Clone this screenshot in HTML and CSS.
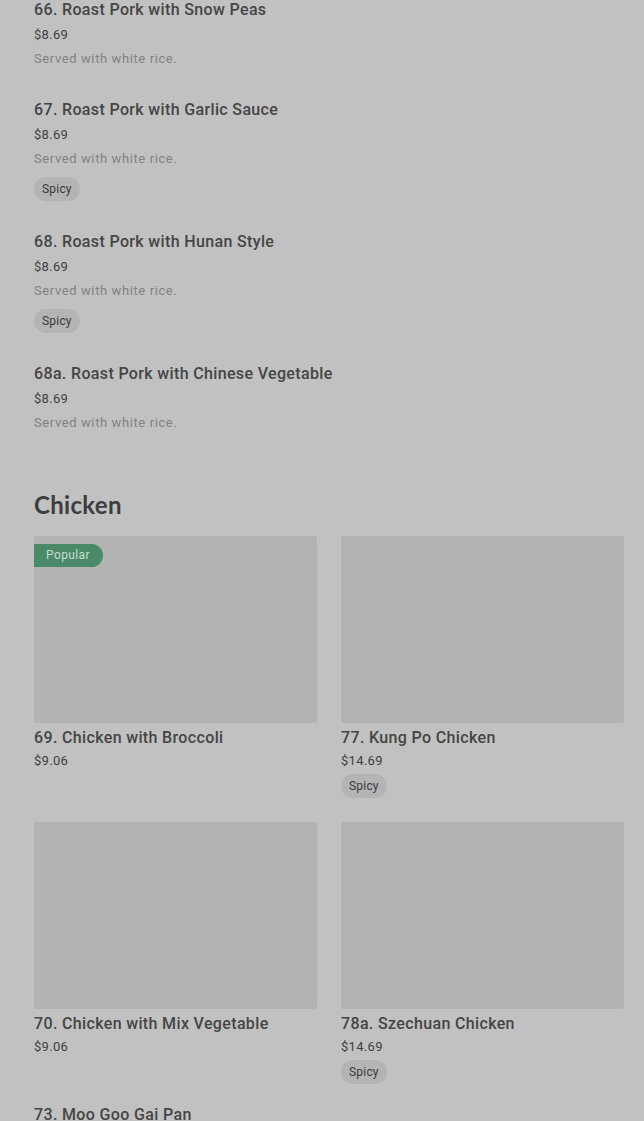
FILE: index.html
```html
<!DOCTYPE html>
<html lang="en">
<head>
    <meta charset="UTF-8" />
    <title>Menu</title>
    <link rel="stylesheet" href="styles.css">
</head>
<body>

<div class="menu">

    <div class="item-list">
        <div class="item">
            <h4 class="item-name">66. Roast Pork with Snow Peas</h4>
            <div class="item-price">$8.69</div>
            <p class="item-desc">Served with white rice.</p>
        </div>
        <div class="item">
            <h4 class="item-name">67. Roast Pork with Garlic Sauce</h4>
            <div class="item-price">$8.69</div>
            <p class="item-desc">Served with white rice.</p>
            <span class="tag">Spicy</span>
        </div>
        <div class="item">
            <h4 class="item-name">68. Roast Pork with Hunan Style</h4>
            <div class="item-price">$8.69</div>
            <p class="item-desc">Served with white rice.</p>
            <span class="tag">Spicy</span>
        </div>
        <div class="item">
            <h4 class="item-name">68a. Roast Pork with Chinese Vegetable</h4>
            <div class="item-price">$8.69</div>
            <p class="item-desc">Served with white rice.</p>
        </div>
    </div>

    <h2 class="section-title">Chicken</h2>

    <div class="card-grid">
        <div class="card">
            <div class="card-img">
                <span class="popular">Popular</span>
            </div>
            <h4 class="item-name">69. Chicken with Broccoli</h4>
            <div class="item-price">$9.06</div>
        </div>
        <div class="card">
            <div class="card-img"></div>
            <h4 class="item-name">77. Kung Po Chicken</h4>
            <div class="item-price">$14.69</div>
            <span class="tag">Spicy</span>
        </div>
        <div class="card">
            <div class="card-img"></div>
            <h4 class="item-name">70. Chicken with Mix Vegetable</h4>
            <div class="item-price">$9.06</div>
        </div>
        <div class="card">
            <div class="card-img"></div>
            <h4 class="item-name">78a. Szechuan Chicken</h4>
            <div class="item-price">$14.69</div>
            <span class="tag">Spicy</span>
        </div>
        <div class="card no-img">
            <h4 class="item-name">73. Moo Goo Gai Pan</h4>
        </div>
    </div>

</div>

</body>
</html>
```

FILE: styles.css
```css
html, body {
    margin: 0;
    padding: 0;
    background: #c1c1c1;
    height: 1121px;
    overflow: hidden;
}
body {
    font-family: Roboto, "Liberation Sans", Arial, sans-serif;
    color: #424242;
}
.menu {
    padding: 0 20px 0 34px;
}
.item {
    padding-bottom: 31px;
}
.item-name {
    margin: 0;
    font-size: 16px;
    line-height: 20px;
    font-weight: 500;
    letter-spacing: 0.35px;
    color: #454545;
}
.item-price {
    margin-top: 5px;
    font-size: 13px;
    line-height: 20px;
    letter-spacing: 0.3px;
    color: #3f3f3f;
}
.item-desc {
    margin: 4px 0 0 0;
    font-size: 13px;
    line-height: 20px;
    letter-spacing: 0.6px;
    color: #818181;
}
.tag {
    display: inline-block;
    margin-top: 8px;
    padding: 0 8px;
    height: 24px;
    line-height: 24px;
    border-radius: 12px;
    background: #b4b4b4;
    font-size: 12px;
    letter-spacing: 0.2px;
    color: #3a3a3a;
}
.section-title {
    margin: 27px 0 17px 0;
    font-family: Lato, "Open Sans", sans-serif;
    font-size: 24px;
    line-height: 28px;
    font-weight: 700;
    letter-spacing: 0.3px;
    color: #3d3d3d;
}
.card-grid {
    display: grid;
    grid-template-columns: repeat(2, 1fr);
    column-gap: 24px;
    row-gap: 24px;
}
.card-img {
    position: relative;
    height: 187px;
    background: #b3b3b3;
    border-radius: 2px;
    margin-bottom: 5px;
}
.card .item-price {
    margin-top: 3px;
}
.card .tag {
    margin-top: 3px;
}
.card.no-img {
    margin-top: -3px;
}
.popular {
    position: absolute;
    left: 0;
    top: 8px;
    height: 23px;
    line-height: 23px;
    padding: 0 13px 0 12px;
    background: #4b8a68;
    color: #c6dfd0;
    font-size: 12px;
    letter-spacing: 0.4px;
    border-radius: 0 12px 12px 0;
}
```
